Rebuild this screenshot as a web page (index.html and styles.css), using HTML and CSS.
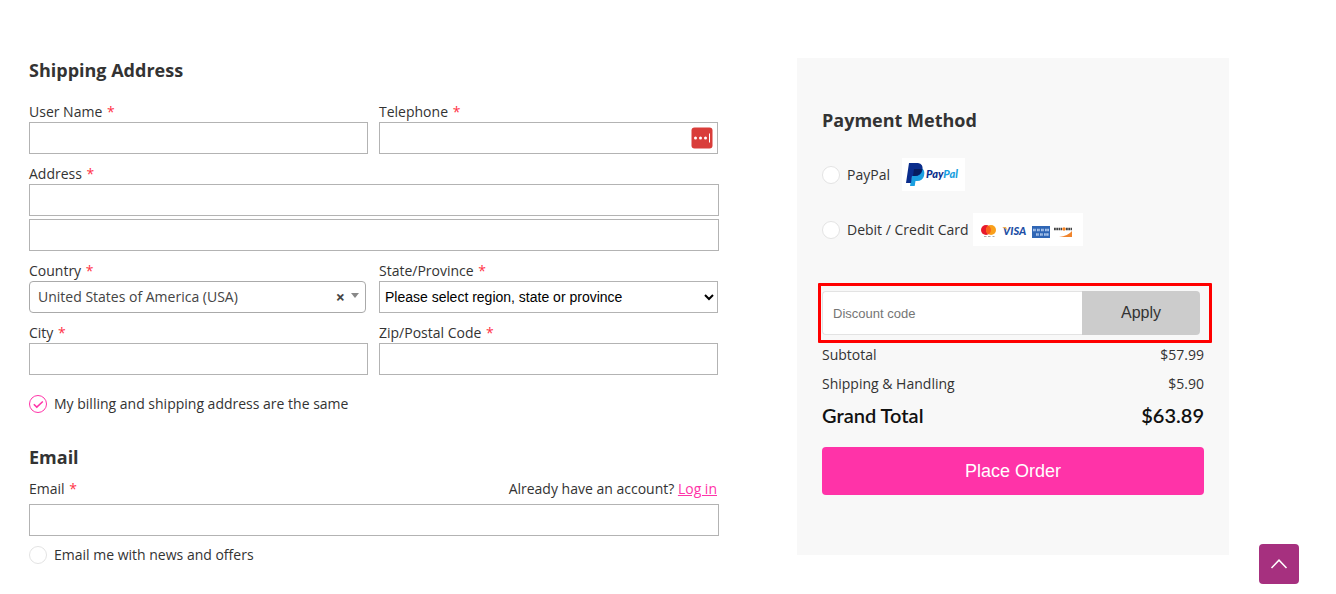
FILE: index.html
```
<!DOCTYPE html>
<html lang="en">
<head>
    <meta charset="UTF-8">
    <meta name="viewport" content="width=device-width, initial-scale=1.0">
    <title>Checkout</title>
    <link rel="stylesheet" href="styles.css">
</head>
<body>

    <main class="checkout">

        <form class="checkout-form">
            <h2>Shipping Address</h2>

            <div class="fields">
                <div class="field">
                    <label for="username">User Name <span class="required">*</span></label>
                    <input class="text-input" type="text" id="username">
                </div>
                <div class="field">
                    <label for="telephone">Telephone <span class="required">*</span></label>
                    <div class="input-wrap">
                        <input class="text-input" type="tel" id="telephone">
                        <svg class="autofill-icon" width="22" height="22" viewBox="0 0 22 22">
                            <rect x="0.5" y="0.5" width="21" height="21" rx="3" fill="#d93d3a"/>
                            <circle cx="4.5" cy="11" r="1.5" fill="#fff"/>
                            <circle cx="9.5" cy="11" r="1.5" fill="#fff"/>
                            <circle cx="14.5" cy="11" r="1.5" fill="#fff"/>
                            <rect x="18" y="6.5" width="1" height="9" fill="#fff"/>
                        </svg>
                    </div>
                </div>
                <div class="field wide">
                    <label for="address1">Address <span class="required">*</span></label>
                    <input class="text-input" type="text" id="address1">
                    <input class="text-input second-line" type="text" id="address2" aria-label="Address line 2">
                </div>
                <div class="field">
                    <label for="country">Country <span class="required">*</span></label>
                    <div class="input-wrap country-wrap">
                        <select class="country-select" id="country">
                            <option>United States of America (USA)</option>
                        </select>
                        <button class="clear-button" type="button" aria-label="Clear">×</button>
                        <span class="arrow"></span>
                    </div>
                </div>
                <div class="field">
                    <label for="state">State/Province <span class="required">*</span></label>
                    <select class="state-select" id="state">
                        <option>Please select region, state or province</option>
                    </select>
                </div>
                <div class="field">
                    <label for="city">City <span class="required">*</span></label>
                    <input class="text-input" type="text" id="city">
                </div>
                <div class="field">
                    <label for="zip">Zip/Postal Code <span class="required">*</span></label>
                    <input class="text-input" type="text" id="zip">
                </div>
            </div>

            <label class="choice same-address">
                <input type="checkbox" checked>
                <svg class="check" width="18" height="18" viewBox="0 0 18 18">
                    <circle class="ring" cx="9" cy="9" r="8.5"/>
                    <path class="tick" d="M4.8 9.2l3 2.9 6-5.6"/>
                </svg>
                My billing and shipping address are the same
            </label>

            <h2 class="email-title">Email</h2>
            <div class="email-head">
                <label for="email">Email <span class="required">*</span></label>
                <span>Already have an account? <a href="#">Log in</a></span>
            </div>
            <input class="text-input" type="email" id="email">

            <label class="choice newsletter">
                <input type="checkbox">
                <svg class="check" width="18" height="18" viewBox="0 0 18 18">
                    <circle class="ring" cx="9" cy="9" r="8.5"/>
                    <path class="tick" d="M4.8 9.2l3 2.9 6-5.6"/>
                </svg>
                Email me with news and offers
            </label>
        </form>

        <aside class="summary">
            <h2>Payment Method</h2>

            <div class="methods">
                <label class="choice method">
                    <input type="radio" name="payment">
                    <svg class="check" width="18" height="18" viewBox="0 0 18 18">
                        <circle class="ring" cx="9" cy="9" r="8.5"/>
                        <path class="tick" d="M4.8 9.2l3 2.9 6-5.6"/>
                    </svg>
                    PayPal
                    <svg class="paypal-logo" width="63" height="33" viewBox="0 0 63 33">
                        <rect width="63" height="33" fill="#fff"/>
                        <path d="M11 10h8q4.500 1.500 3 8-1.500 5-7 5h-1.500l-.8 5H8l1-6z" fill="#1a9fe0"/>
                        <path d="M7 5h9q5.500 1 4.500 7-1.500 6-7.500 6H10l-1 7H4z" fill="#0a2d8c"/>
                        <path d="M12 11h8q-1 7-7.500 7H11z" fill="#071d5e"/>
                        <text class="logo-text" x="24" y="20" font-size="11"><tspan fill="#0a2d8c">Pay</tspan><tspan fill="#1a9fe0">Pal</tspan></text>
                    </svg>
                </label>
                <label class="choice method">
                    <input type="radio" name="payment">
                    <svg class="check" width="18" height="18" viewBox="0 0 18 18">
                        <circle class="ring" cx="9" cy="9" r="8.5"/>
                        <path class="tick" d="M4.8 9.2l3 2.9 6-5.6"/>
                    </svg>
                    Debit / Credit Card
                    <svg class="cards-logo" width="110" height="33" viewBox="0 0 110 33">
                        <rect width="110" height="33" fill="#fff"/>
                        <!-- mastercard -->
                        <circle cx="13" cy="17" r="5" fill="#e8192c"/>
                        <circle cx="18" cy="17" r="5" fill="#f9a01b"/>
                        <path d="M15.500 12.700a5 5 0 0 1 0 8.600a5 5 0 0 1 0-8.600z" fill="#fb5e1a"/>
                        <path d="M11 23.500h2.500M15 23.500h2.500M19.500 23.500h2" stroke="#aaa" stroke-width="1"/>
                        <!-- visa -->
                        <text class="logo-text" x="30" y="22" font-size="11" fill="#1d4fa5">VISA</text>
                        <path d="M29 14h4l1.500 3.500q-2-2.500-5.500-3.500z" fill="#f4b24a"/>
                        <!-- amex -->
                        <rect x="59" y="13" width="18" height="12" fill="#2f66b5"/>
                        <path d="M60 17h3m1 0h3m1 0h3m1 0h4M63 21.500h3m1 0h3m1 0h5" stroke="#a9c4ea" stroke-width="2.500" stroke-dasharray="1.800 .4"/>
                        <!-- discover -->
                        <path d="M81 16h8M93 16h6" stroke="#444" stroke-width="2.500" stroke-dasharray="1.800 .5"/>
                        <circle cx="91" cy="16" r="1.800" fill="#f58220"/>
                        <path d="M99 18v6H86q9-1 13-6z" fill="#f0842c"/>
                    </svg>
                </label>
            </div>

            <div class="discount">
                <input type="text" placeholder="Discount code" aria-label="Discount code">
                <button type="button">Apply</button>
            </div>

            <dl class="totals">
                <div class="row"><dt>Subtotal</dt><dd>$57.99</dd></div>
                <div class="row"><dt>Shipping &amp; Handling</dt><dd>$5.90</dd></div>
                <div class="row grand"><dt>Grand Total</dt><dd>$63.89</dd></div>
            </dl>

            <button class="place-order" type="button">Place Order</button>
        </aside>

    </main>

    <button class="back-to-top" type="button" aria-label="Back to top">
        <svg width="18" height="12" viewBox="0 0 18 12">
            <path d="M1.500 10L9 2.200 16.500 10" fill="none" stroke="#fff" stroke-width="1.500"/>
        </svg>
    </button>

</body>
</html>
```
FILE: styles.css
```
* {
    box-sizing: border-box;
}
body {
    margin: 0;
    font-family: "Open Sans", sans-serif;
    font-size: 14px;
    line-height: 20px;
    color: #333;
    background-color: #fff;
}
h2 {
    margin: 0 0 20px;
    font-size: 18px;
    line-height: 24px;
    font-weight: 700;
}
a {
    color: #ff33a8;
}
button {
    border: none;
    padding: 0;
    cursor: pointer;
}
.checkout {
    display: grid;
    grid-template-columns: 115fr 72fr;
    column-gap: 78px;
    align-items: start;
    padding: 58px 107px 0 29px;
}

/* Address form */
.fields {
    display: grid;
    grid-template-columns: 1fr 1fr;
    gap: 10px 11px;
    padding-right: 1px;
}
.field label {
    display: block;
}
.wide {
    grid-column: 1 / 3;
    margin-right: -1px;
}
.required {
    margin-left: 1px;
    color: #ff3347;
}
.text-input,
.country-select,
.state-select {
    display: block;
    width: 100%;
    height: 32px;
    border: 1px solid #b3b3b3;
    border-radius: 0;
    background-color: #fff;
    font-family: inherit;
    font-size: 14px;
}
.text-input {
    padding: 0 9px;
}
.second-line {
    margin-top: 3px;
}
.input-wrap {
    position: relative;
}
.autofill-icon {
    position: absolute;
    top: 5px;
    right: 5px;
}
.country-wrap {
    margin-right: 2px;
}
.country-select {
    appearance: none;
    padding: 0 50px 1px 8px;
    border-color: #aaa;
    border-radius: 4px;
    color: #444;
}
.clear-button {
    position: absolute;
    top: 6px;
    right: 21px;
    background: none;
    font: bold 16px/20px "Open Sans", sans-serif;
    color: #444;
}
.arrow {
    position: absolute;
    top: 12px;
    right: 7px;
    border: 4px solid transparent;
    border-top: 5px solid #888;
    border-bottom: none;
}
.state-select {
    padding: 0 0 0 1px;
    font-family: "Liberation Sans", Arial, sans-serif;
    color: #000;
}

/* Round check boxes and radios */
.choice {
    display: flex;
    align-items: center;
    position: relative;
    line-height: 24px;
    cursor: pointer;
}
.choice input {
    position: absolute;
    width: 18px;
    height: 18px;
    margin: 0;
    opacity: 0;
}
.check {
    margin-right: 7px;
}
.ring {
    fill: #fff;
    stroke: #e3e3e3;
}
.tick {
    fill: none;
    stroke: none;
    stroke-width: 1.5;
}
.choice input:checked + .check .ring,
.choice input:checked + .check .tick {
    stroke: #ff33a8;
}
.same-address {
    margin-top: 17px;
}
.email-title {
    margin: 29px 0 10px;
}
.email-head {
    display: flex;
    justify-content: space-between;
    margin-bottom: 5px;
    padding-right: 2px;
}
.newsletter {
    margin-top: 7px;
}

/* Order summary */
.summary {
    padding: 50px 25px 60px;
    background-color: #f8f8f8;
}
.methods {
    display: grid;
    gap: 22px;
    margin-top: 26px;
}
.method {
    height: 33px;
}
.paypal-logo {
    margin-left: 12px;
}
.cards-logo {
    margin-left: 4px;
}
.logo-text {
    font-family: Lato, sans-serif;
    font-weight: 900;
    font-style: italic;
}
.discount {
    display: flex;
    margin: 37px -8px 0 -4px;
    padding: 5px 9px 5px 1px;
    border: 3px solid #f00;
    border-radius: 1px;
}
.discount input {
    flex: 1;
    min-width: 0;
    height: 44px;
    padding: 0 10px;
    border: 1px solid #e3e3e3;
    border-right: none;
    border-radius: 4px 0 0 4px;
    font-family: "Liberation Sans", Arial, sans-serif;
    font-size: 13px;
}
.discount input::placeholder {
    color: #757575;
}
.discount button {
    width: 118px;
    border-radius: 0 4px 4px 0;
    background-color: #ccc;
    font-family: "Liberation Sans", Arial, sans-serif;
    font-size: 16px;
    color: #333;
}
.totals {
    display: grid;
    gap: 9px;
    margin: 2px 0 20px;
}
.row {
    display: flex;
    justify-content: space-between;
}
.row dd {
    margin: 0;
}
.grand {
    font-family: Lato, sans-serif;
    font-size: 20px;
    line-height: 24px;
    font-weight: 600;
    color: #111;
}
.place-order {
    display: block;
    width: 100%;
    height: 48px;
    border-radius: 4px;
    background-color: #ff33a8;
    font-family: "Liberation Sans", Arial, sans-serif;
    font-size: 18px;
    color: #fff;
}
.back-to-top {
    display: flex;
    align-items: center;
    justify-content: center;
    position: fixed;
    right: 37px;
    bottom: 10px;
    width: 40px;
    height: 40px;
    border-radius: 4px;
    background-color: #a6307f;
}
```
